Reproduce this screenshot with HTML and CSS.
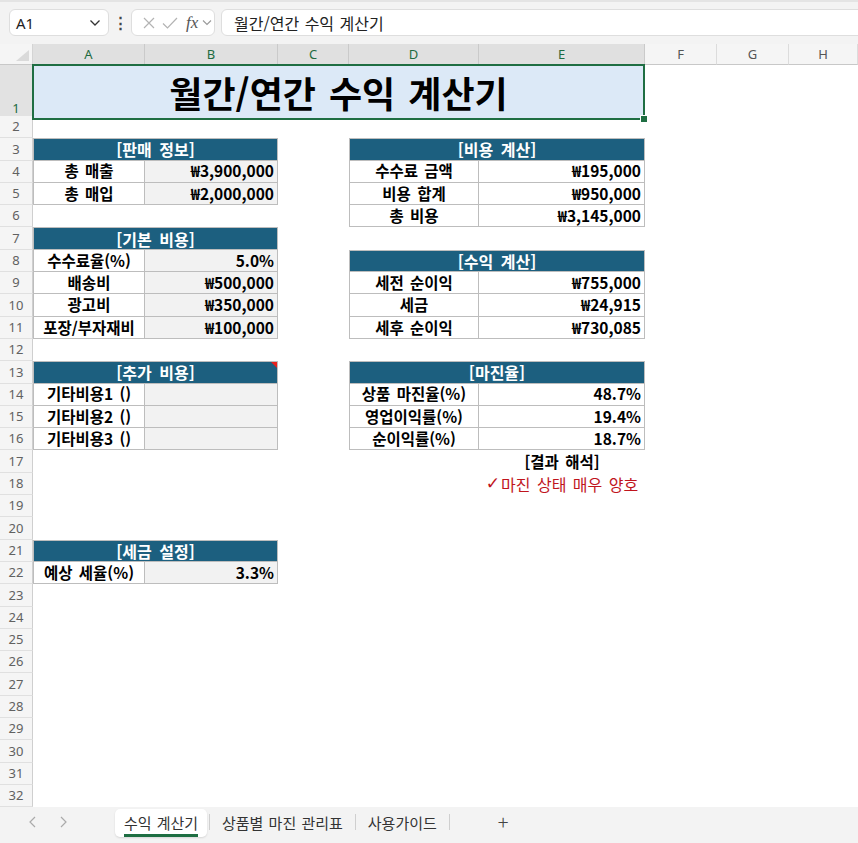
FILE: index.html
```html
<!DOCTYPE html>
<html lang="ko">
<head>
    <meta charset="UTF-8">
    <meta name="viewport" content="width=device-width, initial-scale=1.0">
    <title>월간/연간 수익 계산기</title>
    <link rel="stylesheet" href="styles.css">
</head>
<body>
<div class="app">
    <div class="toolbar">
        <div class="name-box">
            <span>A1</span>
            <svg width="12" height="8" viewBox="0 0 12 8"><path d="M1.5 1.5l4.5 4.5 4.5-4.5" fill="none" stroke="#333" stroke-width="1.3"/></svg>
        </div>
        <div class="more">⋮</div>
        <div class="fx-group">
            <svg width="12" height="12" viewBox="0 0 12 12"><path d="M1 1l10 10M11 1L1 11" stroke="#b3b3b3" stroke-width="1.2"/></svg>
            <svg width="16" height="12" viewBox="0 0 16 12"><path d="M1 6.5l4.5 4.5L15 1" fill="none" stroke="#b3b3b3" stroke-width="1.2"/></svg>
            <span class="fx">fx</span>
            <svg width="10" height="7" viewBox="0 0 10 7"><path d="M1 1.5l4 4 4-4" fill="none" stroke="#999" stroke-width="1.1"/></svg>
        </div>
        <div class="formula">월간/연간 수익 계산기</div>
    </div>

    <div class="sheet">
        <div class="row col-head">
            <div class="corner"></div>
            <div class="ch sel">A</div>
            <div class="ch sel">B</div>
            <div class="ch sel">C</div>
            <div class="ch sel">D</div>
            <div class="ch sel">E</div>
            <div class="ch">F</div>
            <div class="ch">G</div>
            <div class="ch">H</div>
        </div>

        <div class="row r-title">
            <div class="rh sel">1</div>
            <div class="title">월간/연간 수익 계산기<span class="handle"></span></div>
        </div>

        <div class="row"><div class="rh">2</div></div>

        <div class="row">
            <div class="rh">3</div>
            <div class="cell hd ab">[판매 정보]</div>
            <div class="cell hd de">[비용 계산]</div>
        </div>
        <div class="row">
            <div class="rh">4</div>
            <div class="cell lb a">총 매출</div>
            <div class="cell val b in">₩3,900,000</div>
            <div class="cell lb d">수수료 금액</div>
            <div class="cell val e">₩195,000</div>
        </div>
        <div class="row">
            <div class="rh">5</div>
            <div class="cell lb a">총 매입</div>
            <div class="cell val b in">₩2,000,000</div>
            <div class="cell lb d">비용 합계</div>
            <div class="cell val e">₩950,000</div>
        </div>
        <div class="row">
            <div class="rh">6</div>
            <div class="cell lb d">총 비용</div>
            <div class="cell val e">₩3,145,000</div>
        </div>
        <div class="row">
            <div class="rh">7</div>
            <div class="cell hd ab">[기본 비용]</div>
        </div>
        <div class="row">
            <div class="rh">8</div>
            <div class="cell lb a">수수료율(%)</div>
            <div class="cell val b in">5.0%</div>
            <div class="cell hd de">[수익 계산]</div>
        </div>
        <div class="row">
            <div class="rh">9</div>
            <div class="cell lb a">배송비</div>
            <div class="cell val b in">₩500,000</div>
            <div class="cell lb d">세전 순이익</div>
            <div class="cell val e">₩755,000</div>
        </div>
        <div class="row">
            <div class="rh">10</div>
            <div class="cell lb a">광고비</div>
            <div class="cell val b in">₩350,000</div>
            <div class="cell lb d">세금</div>
            <div class="cell val e">₩24,915</div>
        </div>
        <div class="row">
            <div class="rh">11</div>
            <div class="cell lb a">포장/부자재비</div>
            <div class="cell val b in">₩100,000</div>
            <div class="cell lb d">세후 순이익</div>
            <div class="cell val e">₩730,085</div>
        </div>
        <div class="row"><div class="rh">12</div></div>
        <div class="row">
            <div class="rh">13</div>
            <div class="cell hd ab note">[추가 비용]</div>
            <div class="cell hd de">[마진율]</div>
        </div>
        <div class="row">
            <div class="rh">14</div>
            <div class="cell lb a">기타비용1 ()</div>
            <div class="cell val b in"></div>
            <div class="cell lb d">상품 마진율(%)</div>
            <div class="cell val e">48.7%</div>
        </div>
        <div class="row">
            <div class="rh">15</div>
            <div class="cell lb a">기타비용2 ()</div>
            <div class="cell val b in"></div>
            <div class="cell lb d">영업이익률(%)</div>
            <div class="cell val e">19.4%</div>
        </div>
        <div class="row">
            <div class="rh">16</div>
            <div class="cell lb a">기타비용3 ()</div>
            <div class="cell val b in"></div>
            <div class="cell lb d">순이익률(%)</div>
            <div class="cell val e">18.7%</div>
        </div>
        <div class="row">
            <div class="rh">17</div>
            <div class="cell res e">[결과 해석]</div>
        </div>
        <div class="row">
            <div class="rh">18</div>
            <div class="cell res ok e"><span class="tick">✓</span>마진 상태 매우 양호</div>
        </div>
        <div class="row"><div class="rh">19</div></div>
        <div class="row"><div class="rh">20</div></div>
        <div class="row">
            <div class="rh">21</div>
            <div class="cell hd ab">[세금 설정]</div>
        </div>
        <div class="row">
            <div class="rh">22</div>
            <div class="cell lb a">예상 세율(%)</div>
            <div class="cell val b in">3.3%</div>
        </div>
        <div class="row"><div class="rh">23</div></div>
        <div class="row"><div class="rh">24</div></div>
        <div class="row"><div class="rh">25</div></div>
        <div class="row"><div class="rh">26</div></div>
        <div class="row"><div class="rh">27</div></div>
        <div class="row"><div class="rh">28</div></div>
        <div class="row"><div class="rh">29</div></div>
        <div class="row"><div class="rh">30</div></div>
        <div class="row"><div class="rh">31</div></div>
        <div class="row"><div class="rh">32</div></div>
    </div>

    <div class="tabs">
        <div class="nav">
            <svg width="7" height="12" viewBox="0 0 7 12"><path d="M6 1L1 6l5 5" fill="none" stroke="#aaa" stroke-width="1.2"/></svg>
            <svg width="7" height="12" viewBox="0 0 7 12"><path d="M1 1l5 5-5 5" fill="none" stroke="#aaa" stroke-width="1.2"/></svg>
        </div>
        <div class="tab active"><span>수익 계산기</span></div>
        <div class="sep"></div>
        <div class="tab">상품별 마진 관리표</div>
        <div class="sep"></div>
        <div class="tab">사용가이드</div>
        <div class="sep"></div>
        <div class="add">+</div>
    </div>
</div>
</body>
</html>
```

FILE: styles.css
```css
* {
    box-sizing: border-box;
}

html, body {
    margin: 0;
    height: 100%;
}

body {
    font-family: "Noto Sans", "Noto Sans CJK KR", sans-serif;
    background: #fff;
    color: #000;
    overflow: hidden;
}

.app {
    width: 858px;
    height: 843px;
    display: flex;
    flex-direction: column;
}

/* formula bar */
.toolbar {
    height: 44px;
    flex: none;
    display: flex;
    align-items: flex-start;
    padding: 7px 0 0 9px;
    background: #f3f3f3;
    border-top: 2px solid #e4e4e4;
}

.name-box,
.fx-group,
.formula {
    height: 27px;
    background: #fff;
    border: 1px solid #dedede;
    border-radius: 6px;
    display: flex;
    align-items: center;
}

.name-box {
    width: 100px;
    justify-content: space-between;
    padding: 0 7px 0 6px;
    font-size: 15px;
    color: #222;
}

.more {
    width: 22px;
    text-align: center;
    font-size: 15px;
    line-height: 27px;
    color: #444;
    font-weight: 700;
}

.fx-group {
    width: 84px;
    padding-left: 11px;
    gap: 7px;
}

.fx {
    font-family: "Liberation Serif", serif;
    font-style: italic;
    font-size: 17px;
    color: #555;
    margin-left: 1px;
    margin-right: -3px;
}

.formula {
    flex: 1;
    margin-left: 6px;
    margin-right: -10px;
    padding-left: 12px;
    font-family: "Noto Sans CJK KR", sans-serif;
    font-size: 16px;
    word-spacing: 1px;
    color: #222;
}

/* grid */
.sheet {
    flex: none;
}

.row {
    display: grid;
    grid-template-columns: 33px 112px 133px 71px 130px 166px 72px 72px 69px;
    grid-template-rows: 1fr;
    height: 22.3px;
}

.col-head {
    height: 21px;
}

.r-title {
    height: 51px;
}

.corner {
    position: relative;
    background: #f5f5f5;
    border-right: 1px solid #d4d4d4;
    border-bottom: 1px solid #c8c8c8;
}

.corner::after {
    content: "";
    position: absolute;
    right: 3px;
    bottom: 3px;
    border-bottom: 11px solid #dadada;
    border-left: 13px solid transparent;
}

.ch {
    display: flex;
    align-items: center;
    justify-content: center;
    font-size: 13px;
    color: #555;
    background: #f5f5f5;
    border-right: 1px solid #dcdcdc;
    border-bottom: 1px solid #c8c8c8;
}

.ch.sel {
    background: #e0e0e0;
    color: #1e6b41;
    border-right-color: #cacaca;
}

.rh {
    grid-column: 1;
    display: flex;
    align-items: flex-end;
    justify-content: center;
    padding-bottom: 2px;
    font-size: 13px;
    color: #616161;
    background: #f5f5f5;
    border-right: 1px solid #cfcfcf;
    border-bottom: 1px solid #e0e0e0;
}

.rh.sel {
    background: #e2e2e2;
    color: #1e6b41;
}

.title {
    grid-column: 2 / 7;
    position: relative;
    margin: -1px 0 0 -1px;
    display: flex;
    align-items: center;
    justify-content: center;
    background: #dce9f7;
    border: 2px solid #1f6e43;
    font-family: "Noto Sans CJK KR", sans-serif;
    font-size: 36px;
    font-weight: 700;
    word-spacing: 3px;
}

.handle {
    position: absolute;
    right: -5px;
    bottom: -5px;
    width: 8px;
    height: 8px;
    background: #1f6e43;
    border: 1px solid #fff;
}

.a { grid-column: 2; }
.b { grid-column: 3; }
.d { grid-column: 5; }
.e { grid-column: 6; }
.ab { grid-column: 2 / 4; }
.de { grid-column: 5 / 7; }

.cell {
    display: flex;
    align-items: center;
    padding: 0 3px;
    font-family: "Noto Sans CJK KR", sans-serif;
    font-size: 15.5px;
    font-weight: 700;
    line-height: 1;
    word-spacing: 2px;
    white-space: nowrap;
}

.hd {
    justify-content: center;
    background: #1c5f7f;
    color: #fff;
    font-size: 16px;
    word-spacing: 3px;
    border: 1px solid #bdbdbd;
}

.note {
    position: relative;
}

.note::after {
    content: "";
    position: absolute;
    top: 0;
    right: 0;
    border-top: 6px solid #e8211d;
    border-left: 6px solid transparent;
}

.lb {
    justify-content: center;
    border-right: 1px solid #bdbdbd;
    border-bottom: 1px solid #bdbdbd;
}

.lb.a,
.lb.d {
    border-left: 1px solid #bdbdbd;
}

.val {
    justify-content: flex-end;
    border-right: 1px solid #bdbdbd;
    border-bottom: 1px solid #bdbdbd;
}

.in {
    background: #f2f2f2;
}

.res {
    justify-content: center;
}

.res.ok {
    font-size: 16px;
    font-weight: 400;
    color: #c0141c;
}

.tick {
    font-family: "DejaVu Sans", sans-serif;
    font-weight: 700;
    font-size: 17px;
    margin-right: 1px;
}

/* sheet tabs */
.tabs {
    flex: 1;
    display: flex;
    align-items: flex-start;
    background: #f3f3f3;
    font-family: "Noto Sans CJK KR", sans-serif;
    font-size: 15px;
    word-spacing: 1px;
    color: #333;
}

.nav {
    width: 115px;
    height: 30px;
    display: flex;
    align-items: center;
    gap: 24px;
    padding-left: 29px;
}

.tab {
    height: 30px;
    display: flex;
    align-items: center;
    padding: 0 10px;
}

.tab.active {
    margin-top: 2px;
    height: 28px;
    width: 92px;
    justify-content: center;
    padding: 0;
    background: #fff;
    border-radius: 5px;
    box-shadow: 0 1px 2px rgba(0, 0, 0, 0.12);
}

.tab.active span {
    padding-top: 3px;
    padding-bottom: 1px;
    border-bottom: 3px solid #1e6e42;
}

.sep {
    width: 1px;
    height: 16px;
    margin: 7px 2px 0;
    background: #cfcfcf;
}

.add {
    margin-left: 46px;
    height: 30px;
    line-height: 30px;
    font-size: 20px;
    font-weight: 300;
    color: #444;
}
```
